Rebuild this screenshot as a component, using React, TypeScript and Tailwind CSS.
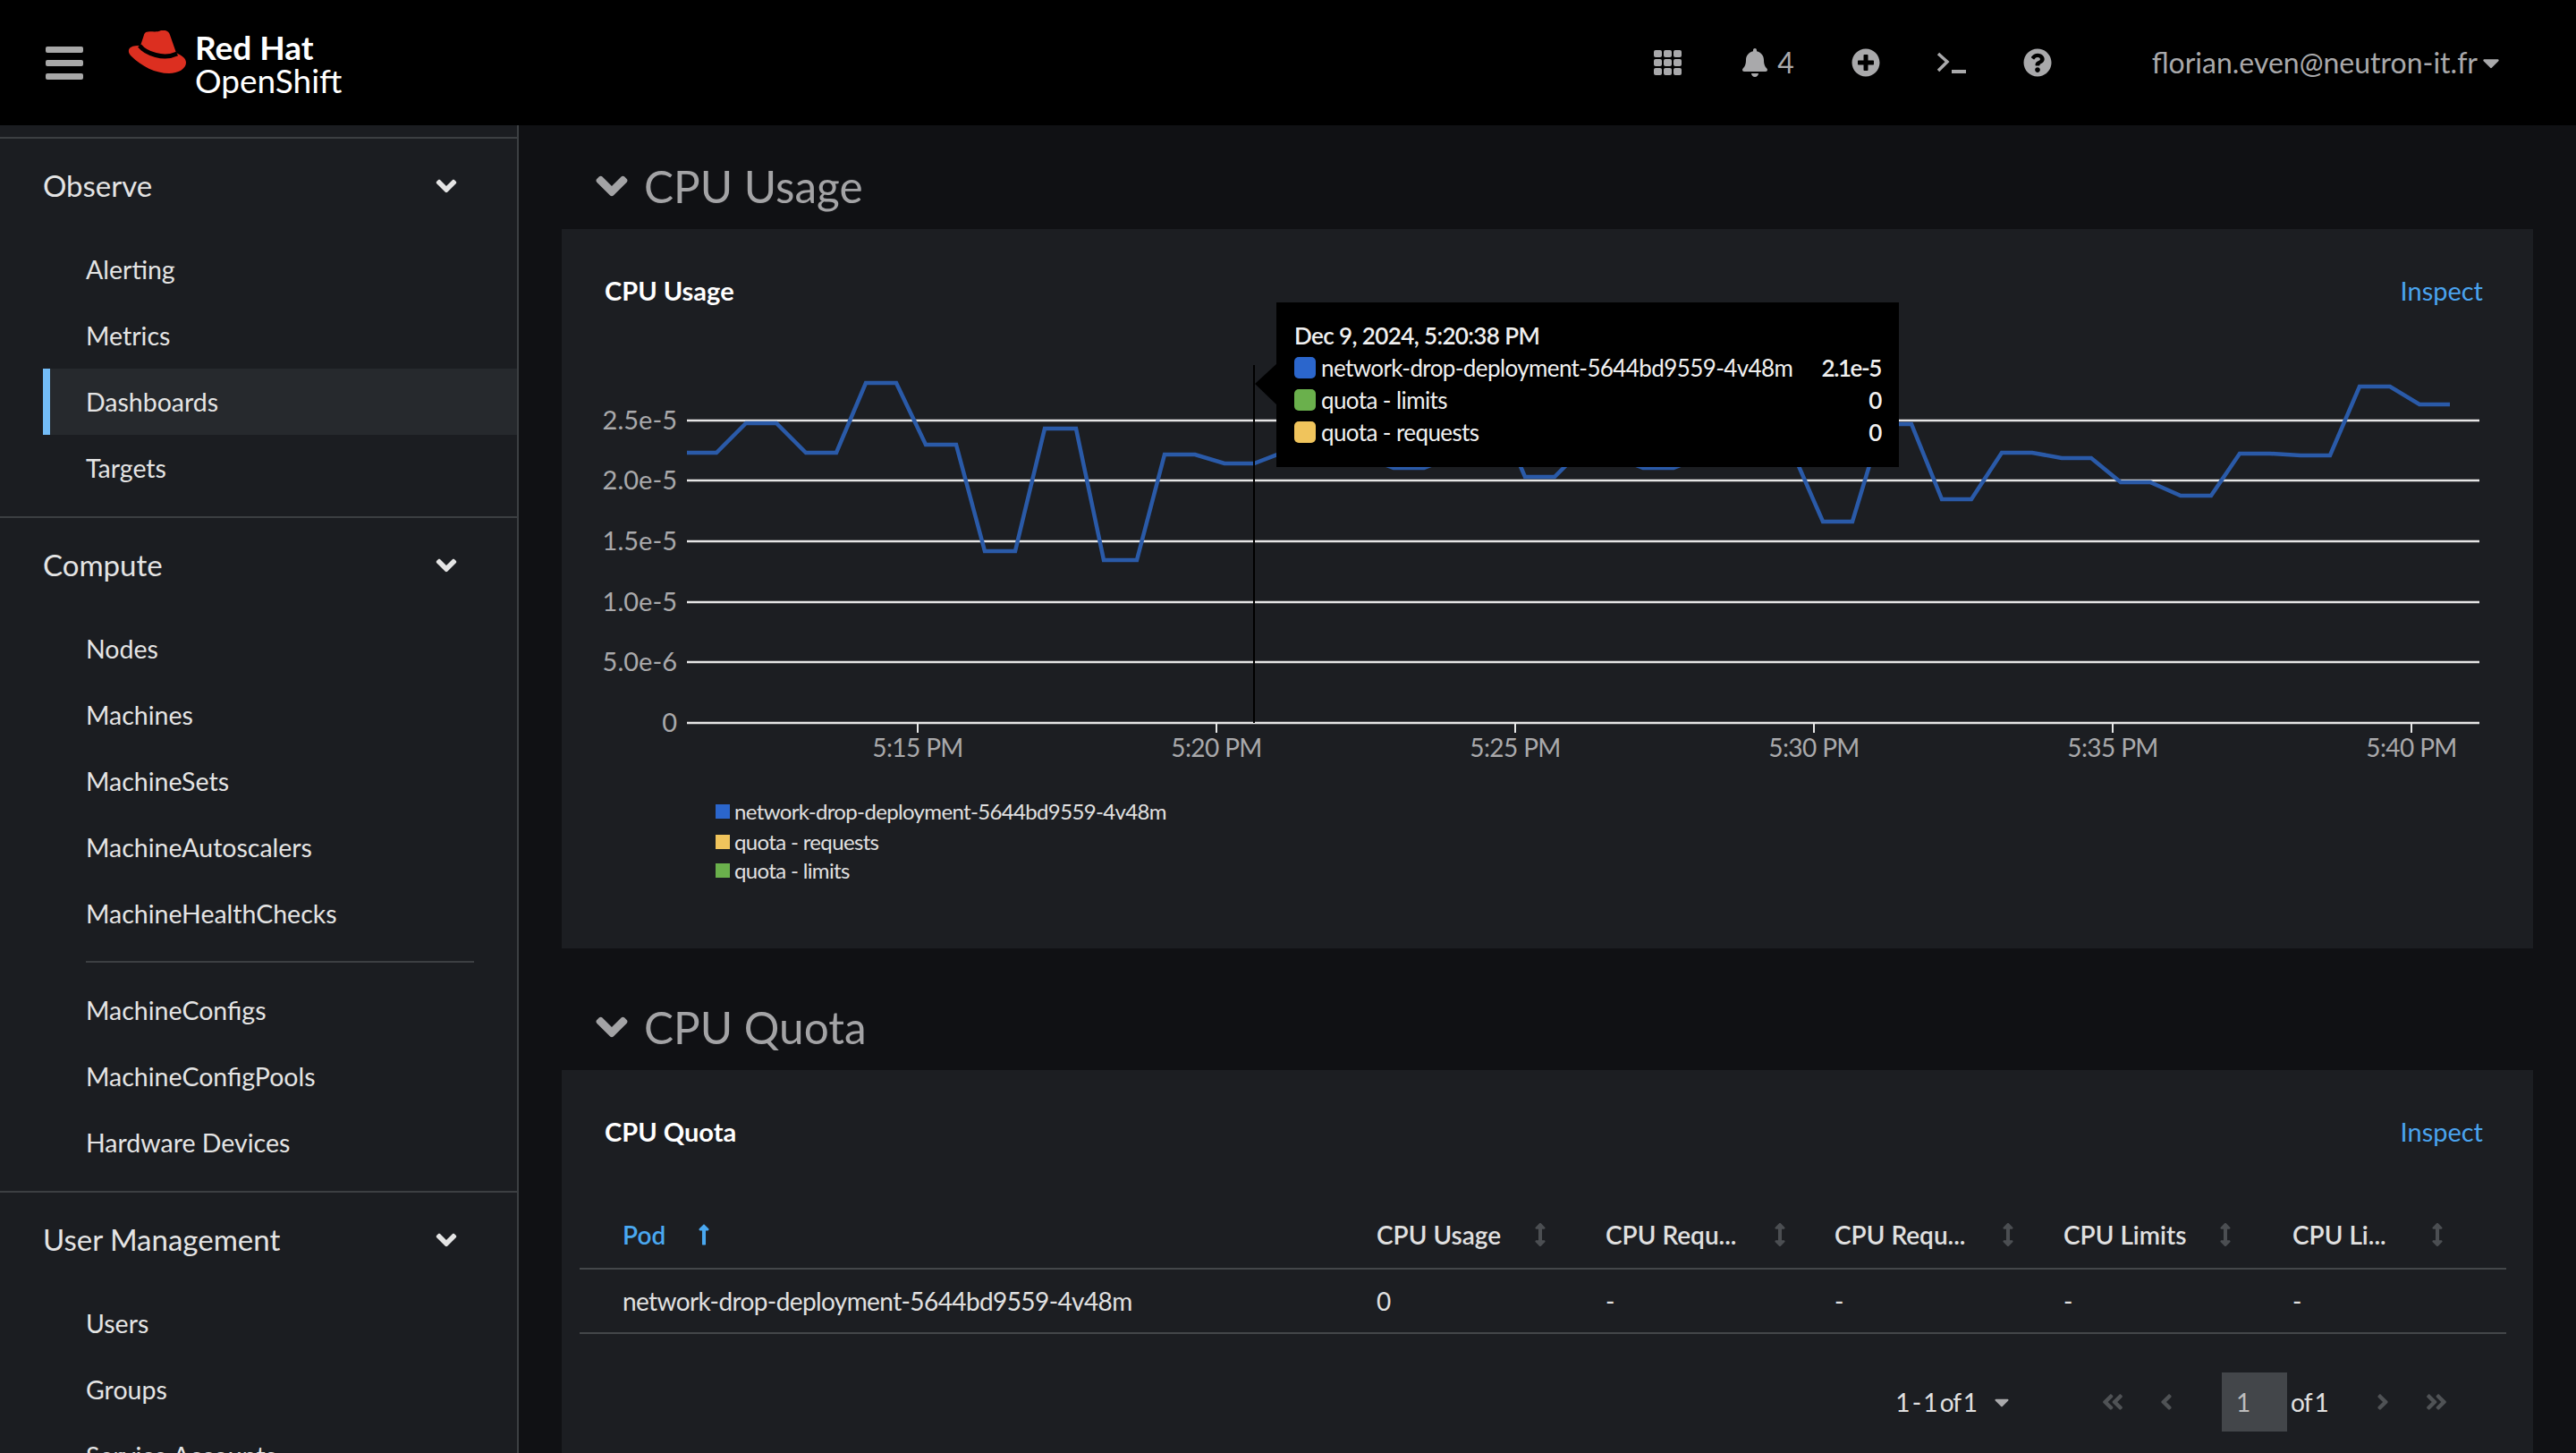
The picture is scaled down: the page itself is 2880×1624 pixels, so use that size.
import {
  FaAngleDoubleLeft,
  FaAngleDoubleRight,
  FaAngleDown,
  FaAngleLeft,
  FaAngleRight,
  FaArrowsAltV,
  FaBell,
  FaCaretDown,
  FaLongArrowAltUp,
  FaPlusCircle,
  FaQuestionCircle,
} from "react-icons/fa";

const font = "font-['Lato','Liberation_Sans',sans-serif]";

const navGroups = [
  { title: "Observe", items: ["Alerting", "Metrics", "Dashboards", "Targets"], extra: [] },
  {
    title: "Compute",
    items: ["Nodes", "Machines", "MachineSets", "MachineAutoscalers", "MachineHealthChecks"],
    extra: ["MachineConfigs", "MachineConfigPools", "Hardware Devices"],
  },
  { title: "User Management", items: ["Users", "Groups", "Service Accounts"], extra: [] },
];

const linePoints =
  "768,506 801,506 834,473 868,473 901,506 935,506 968,428 1002,428 1035,497 1069,497 1101,616 1135,616 1168,479 1203,479 1234,626 1271,626 1302,508 1336,508 1369,518 1402,518 1436,505 1470,500 1503,505 1537,515 1558,523 1592,523 1625,510 1660,490 1693,505 1705,533 1738,533 1771,500 1804,510 1837,523 1871,523 1904,510 1938,500 1971,490 2004,505 2038,583 2071,583 2104,474 2137,474 2171,558 2204,558 2238,506 2272,506 2305,512 2338,512 2371,539 2404,539 2438,554 2472,554 2504,507 2538,507 2572,509 2605,509 2638,432 2672,432 2705,452 2739,452";

const yTicks = [
  { label: "2.5e-5", y: 470 },
  { label: "2.0e-5", y: 537 },
  { label: "1.5e-5", y: 605 },
  { label: "1.0e-5", y: 673 },
  { label: "5.0e-6", y: 740 },
  { label: "0", y: 808 },
];

const xTicks = [
  { label: "5:15 PM", x: 1026 },
  { label: "5:20 PM", x: 1360 },
  { label: "5:25 PM", x: 1694 },
  { label: "5:30 PM", x: 2028 },
  { label: "5:35 PM", x: 2362 },
  { label: "5:40 PM", x: 2696 },
];

const tooltipRows = [
  { name: "network-drop-deployment-5644bd9559-4v48m", value: "2.1e-5", color: "bg-[#2b66cc]" },
  { name: "quota - limits", value: "0", color: "bg-[#6ab04c]" },
  { name: "quota - requests", value: "0", color: "bg-[#f0c45c]" },
];

const legendRows = [
  { name: "network-drop-deployment-5644bd9559-4v48m", color: "bg-[#2b66cc]", gap: "mt-[30px]" },
  { name: "quota - requests", color: "bg-[#f0c45c]", gap: "mt-0" },
  { name: "quota - limits", color: "bg-[#6ab04c]", gap: "mt-[-2px]" },
];

const columns = [
  { label: "CPU Usage", cell: "0", width: "w-[256px]", head: "w-[196px]" },
  { label: "CPU Requ...", cell: "-", width: "w-[256px]", head: "w-[208px]" },
  { label: "CPU Requ...", cell: "-", width: "w-[256px]", head: "w-[207px]" },
  { label: "CPU Limits", cell: "-", width: "w-[256px]", head: "w-[194px]" },
  { label: "CPU Li...", cell: "-", width: "w-[239px]", head: "w-[175px]" },
];

function Logo() {
  return (
    <svg width="65" height="48" viewBox="0 0 65 48">
      <path
        d="M20 2 C25 0 31 3 37 0 C42 -1 46 1 47 5 L54 25 C60 28 65 31 65 36 C65 43 56 48 46 48 C31 48 15 40 4 29 C0 25 0 21 3 19 C6 17 10 17 14 17 L18 5 C18 4 19 3 20 2 Z"
        fill="#dc2f20"
      />
      <path d="M13 17 C20 26 40 33 55 26" fill="none" stroke="#000" strokeWidth="5" />
    </svg>
  );
}

function GridIcon() {
  return (
    <div className="grid h-[28px] w-[31px] grid-cols-3 gap-[2px]">
      {Array.from({ length: 9 }).map((_, i) => (
        <div key={i} className="rounded-[2px] bg-[#a9a9ab]" />
      ))}
    </div>
  );
}

function TerminalIcon() {
  return (
    <svg width="33" height="24" viewBox="0 0 33 24" fill="none" stroke="#a9a9ab">
      <path d="M2 2 L12 11 L2 21" strokeWidth="3.5" />
      <path d="M17 22 H33" strokeWidth="4" />
    </svg>
  );
}

function Header() {
  return (
    <header className="flex h-[140px] items-center bg-black text-[#a9a9ab]">
      <div className="ml-[51px] flex w-[42px] flex-col gap-[8px]">
        <div className="h-[7px] rounded-[2px] bg-[#a8a8a8]" />
        <div className="h-[7px] rounded-[2px] bg-[#a8a8a8]" />
        <div className="h-[7px] rounded-[2px] bg-[#a8a8a8]" />
      </div>
      <div className="mb-[24px] ml-[50px]">
        <Logo />
      </div>
      <div className="mt-[4px] ml-[10px] flex flex-col text-white">
        <span className="text-[37px] leading-[36px] font-bold">Red Hat</span>
        <span className="text-[37px] leading-[38px]">OpenShift</span>
      </div>
      <div className="ml-auto flex items-center">
        <GridIcon />
        <FaBell className="ml-[66px] text-[32px]" />
        <span className="ml-[9px] text-[32px]">4</span>
        <FaPlusCircle className="ml-[64px] text-[32px]" />
        <div className="ml-[63px]">
          <TerminalIcon />
        </div>
        <FaQuestionCircle className="ml-[64px] text-[32px]" />
        <span className="ml-[112px] text-[32px]">florian.even@neutron-it.fr</span>
        <FaCaretDown className="mr-[80px] text-[30px]" />
      </div>
    </header>
  );
}

function NavItem({ label }: { label: string }) {
  const active = label === "Dashboards";
  return (
    <li
      className={
        active
          ? "ml-[48px] flex h-[74px] items-center border-l-[8px] border-[#73bcf7] bg-[#26292d] pl-[40px]"
          : "flex h-[74px] items-center pl-[96px]"
      }
    >
      {label}
    </li>
  );
}

function Sidebar() {
  return (
    <aside className="h-[1484px] w-[580px] shrink-0 overflow-hidden border-r-2 border-[#3c3f42] bg-[#1b1d21] pt-[13px] text-[28.5px] text-[#e4e4e4]">
      {navGroups.map((group) => (
        <section key={group.title} className="border-t-2 border-[#3c3f42] pb-[17px]">
          <div className="flex h-[106px] items-center justify-between pr-[61px] pl-[48px] text-[33px]">
            {group.title}
            <FaAngleDown className="text-[36px]" />
          </div>
          <ul className="pt-[3px]">
            {group.items.map((item) => (
              <NavItem key={item} label={item} />
            ))}
          </ul>
          {group.extra.length > 0 && (
            <ul className="mt-[16px] mr-[48px] ml-[96px] border-t-2 border-[#3c3f42] pt-[16px]">
              {group.extra.map((item) => (
                <li key={item} className="flex h-[74px] items-center">
                  {item}
                </li>
              ))}
            </ul>
          )}
        </section>
      ))}
    </aside>
  );
}

function SectionHeading({ title, top }: { title: string; top: string }) {
  return (
    <div className={`${top} flex h-[96px] items-center pl-[28px] text-[49.5px] text-[#a3a3a5]`}>
      <FaAngleDown className="text-[56px]" />
      <span className="ml-[8px]">{title}</span>
    </div>
  );
}

function CardTitle({ title }: { title: string }) {
  return (
    <div className="flex h-[138px] items-center justify-between pr-[56px] pl-[48px] text-[29px]">
      <span className="font-bold text-white">{title}</span>
      <span className="text-[#4aa3ee]">Inspect</span>
    </div>
  );
}

function UsageChart() {
  return (
    <svg width="2204" height="466" viewBox="628 394 2204 466" className="block">
      {yTicks.map((t) => (
        <g key={t.label}>
          <line x1="768" x2="2772" y1={t.y} y2={t.y} stroke="#e6e6e6" strokeWidth="2.5" />
          <text x="757" y={t.y + 10} textAnchor="end" fontSize="29" fill="#a9a9ab">
            {t.label}
          </text>
        </g>
      ))}
      {xTicks.map((t) => (
        <g key={t.label}>
          <line x1={t.x} x2={t.x} y1="808" y2="819" stroke="#e6e6e6" strokeWidth="2" />
          <text x={t.x} y="846" textAnchor="middle" fontSize="28" letterSpacing="-0.6" fill="#a9a9ab">
            {t.label}
          </text>
        </g>
      ))}
      <polyline points={linePoints} fill="none" stroke="#2a5aa8" strokeWidth="4.5" />
      <line x1="1402" x2="1402" y1="408" y2="808" stroke="#000" strokeWidth="2" />
      <polygon points="1403,429 1428,406 1428,453" fill="#000" />
    </svg>
  );
}

function ChartTooltip() {
  return (
    <div className="absolute top-[-56px] left-[799px] flex h-[184px] w-[696px] flex-col bg-black px-[20px] pt-[19px] text-[26px] tracking-[-0.6px] whitespace-nowrap text-[#f0f0f0]">
      <div className="h-[36px] leading-[36px] font-semibold">Dec 9, 2024, 5:20:38 PM</div>
      {tooltipRows.map((row) => (
        <div key={row.name} className="flex h-[36px] items-center">
          <span className={`h-[24px] w-[24px] rounded-[5px] ${row.color}`} />
          <span className="ml-[6px]">{row.name}</span>
          <span className="ml-auto font-semibold tracking-[-1.4px]">{row.value}</span>
        </div>
      ))}
    </div>
  );
}

function Legend() {
  return (
    <div className="pl-[172px] text-[24px] tracking-[-0.65px] text-[#e0e0e0]">
      {legendRows.map((row) => (
        <div key={row.name} className={`${row.gap} flex h-[34px] items-center`}>
          <span className={`h-[16px] w-[16px] ${row.color}`} />
          <span className="ml-[5px]">{row.name}</span>
        </div>
      ))}
    </div>
  );
}

function QuotaTable() {
  return (
    <div className="mr-[30px] ml-[20px] text-[28px]">
      <div className="mt-[9px] flex h-[76px] items-center border-b-2 border-[#44474a] font-semibold text-[#e0e0e0]">
        <div className="flex w-[891px] items-center pl-[48px] text-[#4aa8f0]">
          Pod
          <FaLongArrowAltUp className="ml-[30px] text-[26px]" />
        </div>
        {columns.map((col, i) => (
          <div key={i} className={`${col.width} flex items-center`}>
            <span className={`${col.head} flex items-center justify-between`}>
              {col.label}
              <FaArrowsAltV className="text-[26px] text-[#4b4e52]" />
            </span>
          </div>
        ))}
      </div>
      <div className="flex h-[72px] items-center border-b-2 border-[#44474a] text-[#e0e0e0]">
        <div className="w-[891px] pl-[48px] tracking-[-0.6px]">network-drop-deployment-5644bd9559-4v48m</div>
        {columns.map((col, i) => (
          <div key={i} className={col.width}>
            {col.cell}
          </div>
        ))}
      </div>
    </div>
  );
}

function Pagination() {
  return (
    <div className="mt-[43px] flex h-[66px] items-center justify-end pr-[94px] text-[28px] text-[#e0e0e0]">
      <span className="tracking-[-1px] [word-spacing:-3px]">1 - 1 of 1</span>
      <FaCaretDown className="ml-[15px] text-[26px] text-[#a9a9ab]" />
      <FaAngleDoubleLeft className="ml-[97px] text-[28px] text-[#4f5255]" />
      <FaAngleLeft className="ml-[32px] text-[28px] text-[#4f5255]" />
      <div className="ml-[48px] flex h-[66px] w-[73px] items-center bg-[#43464a] pl-[16px] text-[#bdbdbd]">1</div>
      <span className="ml-[4px] tracking-[-0.8px] [word-spacing:-3px]">of 1</span>
      <FaAngleRight className="ml-[47px] text-[28px] text-[#4f5255]" />
      <FaAngleDoubleRight className="ml-[32px] text-[28px] text-[#4f5255]" />
    </div>
  );
}

export default function App() {
  return (
    <div className={`${font} h-[1624px] w-[2880px] overflow-hidden bg-[#101114]`}>
      <Header />
      <div className="flex">
        <Sidebar />
        <main className="w-[2300px] px-[48px]">
          <SectionHeading title="CPU Usage" top="mt-[20px]" />
          <div className="h-[804px] bg-[#1c1e22]">
            <CardTitle title="CPU Usage" />
            <div className="relative">
              <UsageChart />
              <ChartTooltip />
            </div>
            <Legend />
          </div>
          <SectionHeading title="CPU Quota" top="mt-[40px]" />
          <div className="h-[428px] bg-[#1c1e22]">
            <CardTitle title="CPU Quota" />
            <QuotaTable />
            <Pagination />
          </div>
        </main>
      </div>
    </div>
  );
}
